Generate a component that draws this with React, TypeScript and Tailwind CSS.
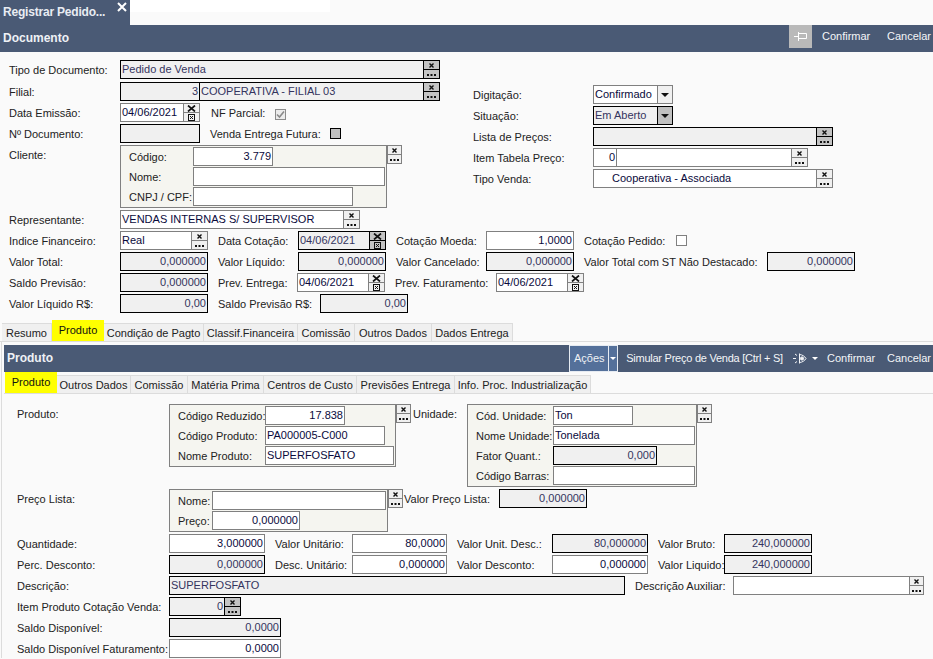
import type { ReactNode } from "react";

const BAR = "bg-[#4a5a75]";

// the little clear / lookup button glued to the right of a field
function MiniBtn({ dark, date, className = "" }: { dark?: boolean; date?: boolean; className?: string }) {
  const edge = dark ? "border-black" : "border-[#808080]";
  const fill = dark ? "bg-[#c4c4c4]" : "bg-[#f0f0f0]";
  return (
    <div className={`flex flex-col shrink-0 h-[19px] border ${edge} ${fill} ${className}`}>
      <div className={`flex-1 flex items-center justify-center border-b ${edge}`}>
        <svg width="9" height="7" viewBox="0 0 9 7" stroke="#111" strokeWidth={date ? 1.7 : 1.4} fill="none">
          <path d={date ? "M1 0.5 8 6.5M8 0.5 1 6.5" : "M2.5 1.5 6.5 5.5M6.5 1.5 2.5 5.5"} />
        </svg>
      </div>
      <div className="flex-1 flex items-center justify-center">
        {date ? (
          <svg width="7" height="7" viewBox="0 0 7 7" stroke="#111" fill="none" strokeWidth="1">
            <rect x="0.5" y="0.5" width="6" height="6" />
            <path d="M2 2 5 5M5 2 2 5" />
          </svg>
        ) : (
          <svg width="9" height="3" viewBox="0 0 9 3" fill="#111">
            <rect x="0" y="1" width="2" height="2" />
            <rect x="3.5" y="1" width="2" height="2" />
            <rect x="7" y="1" width="2" height="2" />
          </svg>
        )}
      </div>
    </div>
  );
}

function Field({
  w,
  value = "",
  right,
  off,
  pad = "px-px",
  children,
}: {
  w: string;
  value?: string;
  right?: boolean;
  off?: boolean;
  pad?: string;
  children?: ReactNode;
}) {
  return (
    <div
      className={`${w} shrink-0 h-[19px] flex border ${
        off ? "border-black bg-[#f0f0f0] text-[#34345e]" : "border-[#808080] bg-white text-[#0a0a3c]"
      }`}
    >
      <div className={`flex-1 min-w-0 ${pad} leading-[16px] whitespace-nowrap overflow-hidden ${right ? "text-right" : ""}`}>
        {value}
      </div>
      {children}
    </div>
  );
}

function FieldBtn(props: { w: string; value?: string; right?: boolean; off?: boolean; date?: boolean; pad?: string }) {
  const { date, ...rest } = props;
  return (
    <Field {...rest}>
      <MiniBtn dark={props.off} date={date} className="-my-px -mr-px w-[17px]" />
    </Field>
  );
}

function Label({ w, children, ml }: { w: string; children: ReactNode; ml?: boolean }) {
  return (
    <div className={`${w} ${ml ? "ml-[10px]" : ""} shrink-0 leading-[21px] text-[#222] whitespace-nowrap`}>{children}</div>
  );
}

function Row({ children, mt = "mt-[2px]" }: { children: ReactNode; mt?: string }) {
  return <div className={`flex items-start h-[19px] ${mt}`}>{children}</div>;
}

function BoxRow({ children }: { children: ReactNode }) {
  return <div className="flex h-[19px] mb-px">{children}</div>;
}

function Box({ w, h, children }: { w: string; h: string; children: ReactNode }) {
  return (
    <div className={`${w} ${h} shrink-0 border border-[#808080] bg-[#f5f5f0] pt-px pl-[8px]`}>{children}</div>
  );
}

function Tab({ w, label, active }: { w: string; label: string; active?: boolean }) {
  return (
    <div
      className={`${w} shrink-0 text-center whitespace-nowrap ${
        active
          ? "bg-[#ffff00] text-[#111] h-[21px] leading-[20px]"
          : "self-end h-[18px] leading-[19px] bg-[#f0f0f0] border-t border-r border-[#dcdcdc] text-[#222]"
      }`}
    >
      {label}
    </div>
  );
}

function BarAction({ children, w }: { children: ReactNode; w: string }) {
  return <div className={`${w} shrink-0 text-[#f4f6f8] whitespace-nowrap`}>{children}</div>;
}

export default function App() {
  return (
    <div className="w-[933px] h-[659px] overflow-hidden bg-[#fafafa] text-[11px] font-['Liberation_Sans',Arial,sans-serif]">
      {/* window tab */}
      <div className="flex h-[25px]">
        <div className={`w-[130px] flex ${BAR} text-[#e8ecf2] font-bold text-[12px]`}>
          <span className="pl-[3px] pt-[5px] leading-[15px] whitespace-nowrap tracking-[-0.2px]">Registrar Pedido...</span>
          <svg className="ml-auto mr-[3px] mt-[2px]" width="10" height="10" viewBox="0 0 10 10" stroke="#fff" strokeWidth="2">
            <path d="M1 1 9 9M9 1 1 9" />
          </svg>
        </div>
        <div className="w-[200px] h-[12px] bg-white" />
      </div>

      {/* Documento header */}
      <div className={`flex items-start h-[27px] ${BAR}`}>
        <div className="pl-[3px] pt-[6px] font-bold text-[12px] leading-[15px] text-[#eef1f5]">Documento</div>
        <div className="ml-auto w-[23px] h-[23px] bg-[#b9b9b9] flex items-center justify-center">
          <svg width="13" height="9" viewBox="0 0 13 9" stroke="#fff" fill="none">
            <path d="M0 4.5H4M4.5 0V9M4.5 1.5H12.5V6.5H4.5" />
          </svg>
        </div>
        <div className="pl-[10px] pt-[4px] leading-[15px] flex">
          <BarAction w="w-[65px]">Confirmar</BarAction>
          <BarAction w="w-[46px]">Cancelar</BarAction>
        </div>
      </div>

      {/* Documento form */}
      <div className="flex">
        <div className="w-[473px] pl-[9px] pt-[8px]">
          <Row mt="mt-0">
            <Label w="w-[111px]">Tipo de Documento:</Label>
            <FieldBtn w="w-[320px]" value="Pedido de Venda" off />
          </Row>
          <Row mt="mt-[3px]">
            <Label w="w-[111px]">Filial:</Label>
            <Field w="w-[80px]" value="3" right off />
            <div className="-ml-px">
              <FieldBtn w="w-[241px]" value="COOPERATIVA - FILIAL 03" off />
            </div>
          </Row>
          <Row>
            <Label w="w-[111px]">Data Emissão:</Label>
            <FieldBtn w="w-[80px]" value="04/06/2021" date />
            <Label w="w-[65px]" ml>
              <span className="pl-px">NF Parcial:</span>
            </Label>
            <div className="mt-[6px] w-[11px] h-[11px] border border-[#8c8c8c] bg-[#ececec] flex items-center justify-center">
              <svg width="9" height="9" viewBox="0 0 9 9" fill="none" stroke="#8a8a8a" strokeWidth="1.6">
                <path d="M1 4.5 3.5 7 8 1.5" />
              </svg>
            </div>
          </Row>
          <Row>
            <Label w="w-[111px]">Nº Documento:</Label>
            <Field w="w-[80px]" off />
            <Label w="w-[120px]" ml>
              Venda Entrega Futura:
            </Label>
            <div className="mt-[4px] w-[11px] h-[11px] border border-black bg-[#c0c0c0]" />
          </Row>
          <div className="flex items-start mt-[2px] h-[63px]">
            <Label w="w-[111px]">Cliente:</Label>
            <Box w="w-[267px]" h="h-[63px]">
              <BoxRow>
                <Label w="w-[64px]">Código:</Label>
                <Field w="w-[80px]" value="3.779" right />
              </BoxRow>
              <BoxRow>
                <Label w="w-[64px]">Nome:</Label>
                <Field w="w-[192px]" />
              </BoxRow>
              <BoxRow>
                <Label w="w-[64px]">CNPJ / CPF:</Label>
                <Field w="w-[160px]" />
              </BoxRow>
            </Box>
            <MiniBtn className="w-[15px]" />
          </div>
        </div>

        <div className="pt-[33px]">
          <Row mt="mt-0">
            <Label w="w-[120px]">Digitação:</Label>
            <Field w="w-[80px]" value="Confirmado">
              <Caret />
            </Field>
          </Row>
          <Row>
            <Label w="w-[120px]">Situação:</Label>
            <Field w="w-[80px]" value="Em Aberto" off>
              <Caret off />
            </Field>
          </Row>
          <Row>
            <Label w="w-[120px]">Lista de Preços:</Label>
            <FieldBtn w="w-[240px]" off />
          </Row>
          <Row>
            <Label w="w-[120px]">Item Tabela Preço:</Label>
            <Field w="w-[24px]" value="0" right />
            <div className="-ml-px">
              <FieldBtn w="w-[192px]" />
            </div>
          </Row>
          <Row>
            <Label w="w-[120px]">Tipo Venda:</Label>
            <FieldBtn w="w-[240px]" value="Cooperativa - Associada" pad="pl-[18px]" />
          </Row>
        </div>
      </div>

      <div className="pl-[9px]">
        <Row>
          <Label w="w-[111px]">Representante:</Label>
          <FieldBtn w="w-[240px]" value="VENDAS INTERNAS S/ SUPERVISOR" />
        </Row>
        <Row>
          <Label w="w-[111px]">Indice Financeiro:</Label>
          <FieldBtn w="w-[88px]" value="Real" />
          <Label w="w-[80px]" ml>
            Data Cotação:
          </Label>
          <FieldBtn w="w-[88px]" value="04/06/2021" off date />
          <Label w="w-[90px]" ml>
            Cotação Moeda:
          </Label>
          <Field w="w-[88px]" value="1,0000" right />
          <Label w="w-[92px]" ml>
            Cotação Pedido:
          </Label>
          <div className="mt-[4px] w-[11px] h-[11px] border border-[#808080] bg-white" />
        </Row>
        <Row>
          <Label w="w-[111px]">Valor Total:</Label>
          <Field w="w-[88px]" value="0,000000" right off />
          <Label w="w-[80px]" ml>
            Valor Líquido:
          </Label>
          <Field w="w-[88px]" value="0,000000" right off />
          <Label w="w-[90px]" ml>
            Valor Cancelado:
          </Label>
          <Field w="w-[88px]" value="0,000000" right off />
          <Label w="w-[183px]" ml>
            Valor Total com ST Não Destacado:
          </Label>
          <Field w="w-[88px]" value="0,000000" right off />
        </Row>
        <Row>
          <Label w="w-[111px]">Saldo Previsão:</Label>
          <Field w="w-[88px]" value="0,000000" right off />
          <Label w="w-[79px]" ml>
            Prev. Entrega:
          </Label>
          <FieldBtn w="w-[88px]" value="04/06/2021" date />
          <Label w="w-[101px]" ml>
            Prev. Faturamento:
          </Label>
          <FieldBtn w="w-[88px]" value="04/06/2021" date />
        </Row>
        <Row>
          <Label w="w-[111px]">Valor Líquido R$:</Label>
          <Field w="w-[88px]" value="0,00" right off />
          <Label w="w-[102px]" ml>
            Saldo Previsão R$:
          </Label>
          <Field w="w-[88px]" value="0,00" right off />
        </Row>
      </div>

      {/* main tabs */}
      <div className="flex items-end h-[22px] mt-[7px] pl-[2px] border-b border-[#dcdcdc]">
        <Tab w="w-[50px]" label="Resumo" />
        <Tab w="w-[52px]" label="Produto" active />
        <Tab w="w-[100px]" label="Condição de Pagto" />
        <Tab w="w-[94px]" label="Classif.Financeira" />
        <Tab w="w-[57px]" label="Comissão" />
        <Tab w="w-[77px]" label="Outros Dados" />
        <Tab w="w-[81px]" label="Dados Entrega" />
      </div>

      <div className="ml-px border-l border-[#dcdcdc] pl-[2px] pt-[3px]">
        {/* Produto header */}
        <div className={`flex items-stretch h-[27px] ${BAR} leading-[27px]`}>
          <div className="pl-[3px] w-[566px] font-bold text-[12px] text-[#eef1f5]">Produto</div>
          <div className="w-[40px] border border-[#e6ebf2] bg-[#54709a] text-center text-[#eef1f5] leading-[25px]">Ações</div>
          <div className="w-[9px] border-y border-r border-[#e6ebf2] bg-[#54709a] flex items-center justify-center">
            <div className="w-0 h-0 border-x-[3px] border-x-transparent border-t-[3px] border-t-white" />
          </div>
          <div className="pl-[8px] w-[175px]">
            <BarAction w="w-full">
              <span className="tracking-[-0.25px]">Simular Preço de Venda [Ctrl + S]</span>
            </BarAction>
          </div>
          <div className="w-[34px] flex items-center">
            <svg width="14" height="11" viewBox="0 0 14 11" fill="none" stroke="#f2f4f7" strokeWidth="1">
              <path d="M0 5.5H3M2 1 4 2.5M2 10 4 8.5M6.5 0.5V10.5" />
              <path d="M6.5 1.5C9 1.5 12 3.5 13 5.5 12 7.5 9 9.5 6.5 9.5" />
              <circle cx="9" cy="5.5" r="1.6" fill="#f2f4f7" />
            </svg>
            <div className="ml-[5px] w-0 h-0 border-x-[3px] border-x-transparent border-t-[3px] border-t-white" />
          </div>
          <BarAction w="w-[60px]">Confirmar</BarAction>
          <BarAction w="w-[46px]">Cancelar</BarAction>
        </div>

        {/* Produto sub tabs */}
        <div className="flex items-end h-[22px] pl-px border-b border-[#dcdcdc]">
          <Tab w="w-[52px]" label="Produto" active />
          <Tab w="w-[74px]" label="Outros Dados" />
          <Tab w="w-[57px]" label="Comissão" />
          <Tab w="w-[76px]" label="Matéria Prima" />
          <Tab w="w-[93px]" label="Centros de Custo" />
          <Tab w="w-[98px]" label="Previsões Entrega" />
          <Tab w="w-[136px]" label="Info. Proc. Industrialização" />
        </div>

        {/* Produto form */}
        <div className="pl-[13px] pt-[10px]">
          <div className="flex items-start h-[83px]">
            <Label w="w-[152px]">Produto:</Label>
            <Box w="w-[227px]" h="h-[63px]">
              <BoxRow>
                <Label w="w-[87px]">Código Reduzido:</Label>
                <Field w="w-[80px]" value="17.838" right />
              </BoxRow>
              <BoxRow>
                <Label w="w-[87px]">Código Produto:</Label>
                <Field w="w-[120px]" value="PA000005-C000" />
              </BoxRow>
              <BoxRow>
                <Label w="w-[87px]">Nome Produto:</Label>
                <Field w="w-[129px]" value="SUPERFOSFATO" />
              </BoxRow>
            </Box>
            <MiniBtn className="w-[15px]" />
            <div className="pl-[2px]">
              <Label w="w-[54px]">Unidade:</Label>
            </div>
            <Box w="w-[230px]" h="h-[83px]">
              <BoxRow>
                <Label w="w-[77px]">Cód. Unidade:</Label>
                <Field w="w-[80px]" value="Ton" />
              </BoxRow>
              <BoxRow>
                <Label w="w-[77px]">Nome Unidade:</Label>
                <Field w="w-[142px]" value="Tonelada" />
              </BoxRow>
              <BoxRow>
                <Label w="w-[77px]">Fator Quant.:</Label>
                <Field w="w-[104px]" value="0,000" right off />
              </BoxRow>
              <BoxRow>
                <Label w="w-[77px]">Código Barras:</Label>
                <Field w="w-[142px]" />
              </BoxRow>
            </Box>
            <MiniBtn className="w-[15px]" />
          </div>

          <div className="flex items-start h-[43px] mt-[2px]">
            <Label w="w-[152px]">Preço Lista:</Label>
            <Box w="w-[219px]" h="h-[43px]">
              <BoxRow>
                <Label w="w-[34px]">Nome:</Label>
                <Field w="w-[174px]" />
              </BoxRow>
              <BoxRow>
                <Label w="w-[34px]">Preço:</Label>
                <Field w="w-[88px]" value="0,000000" right />
              </BoxRow>
            </Box>
            <MiniBtn className="w-[15px]" />
            <div className="pl-px">
              <Label w="w-[95px]">Valor Preço Lista:</Label>
            </div>
            <Field w="w-[88px]" value="0,000000" right off />
          </div>

          <Row>
            <Label w="w-[152px]">Quantidade:</Label>
            <Field w="w-[96px]" value="3,000000" right />
            <Label w="w-[77px]" ml>
              Valor Unitário:
            </Label>
            <Field w="w-[95px]" value="80,0000" right />
            <Label w="w-[95px]" ml>
              Valor Unit. Desc.:
            </Label>
            <Field w="w-[96px]" value="80,000000" right off />
            <Label w="w-[66px]" ml>
              Valor Bruto:
            </Label>
            <Field w="w-[88px]" value="240,000000" right off />
          </Row>
          <Row>
            <Label w="w-[152px]">Perc. Desconto:</Label>
            <Field w="w-[96px]" value="0,000000" right off />
            <Label w="w-[77px]" ml>
              Desc. Unitário:
            </Label>
            <Field w="w-[95px]" value="0,000000" right />
            <Label w="w-[95px]" ml>
              Valor Desconto:
            </Label>
            <Field w="w-[96px]" value="0,000000" right />
            <Label w="w-[66px]" ml>
              Valor Liquido:
            </Label>
            <Field w="w-[88px]" value="240,000000" right off />
          </Row>
          <Row>
            <Label w="w-[152px]">Descrição:</Label>
            <Field w="w-[456px]" value="SUPERFOSFATO" off />
            <Label w="w-[98px]" ml>
              Descrição Auxiliar:
            </Label>
            <Field w="w-[191px]">
              <MiniBtn className="-my-px -mr-px w-[15px]" />
            </Field>
          </Row>
          <Row>
            <Label w="w-[152px]">Item Produto Cotação Venda:</Label>
            <FieldBtn w="w-[72px]" value="0" right off />
          </Row>
          <Row>
            <Label w="w-[152px]">Saldo Disponível:</Label>
            <Field w="w-[112px]" value="0,0000" right off />
          </Row>
          <Row>
            <Label w="w-[152px]">Saldo Disponível Faturamento:</Label>
            <Field w="w-[112px]" value="0,0000" right />
          </Row>
        </div>
      </div>
    </div>
  );
}

function Caret({ off }: { off?: boolean }) {
  return (
    <div
      className={`w-[15px] shrink-0 border-l flex items-center justify-center ${
        off ? "border-black bg-[#c0c0c0]" : "border-[#808080] bg-[#f0f0f0]"
      }`}
    >
      <div className="w-0 h-0 border-x-[4px] border-x-transparent border-t-[4px] border-t-[#111]" />
    </div>
  );
}
